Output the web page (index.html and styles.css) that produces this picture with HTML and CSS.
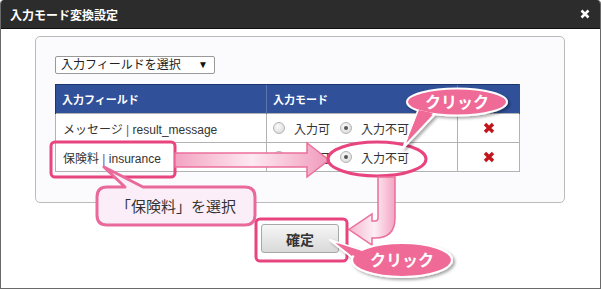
FILE: index.html
```html
<!DOCTYPE html>
<html lang="ja">
<head>
<meta charset="UTF-8" />
<meta name="viewport" content="width=device-width, initial-scale=1" />
<title>入力モード変換設定</title>
<link rel="stylesheet" href="styles.css">
</head>
<body>
  <div class="dialog">
    <div class="titlebar">
      <span class="title">入力モード変換設定</span>
      <svg class="close" width="10" height="10" viewBox="0 0 10 10">
        <path d="M1.5 1.5 L8.5 8.5 M8.5 1.5 L1.5 8.5" stroke="#fff" stroke-width="2.6" />
      </svg>
    </div>

    <div class="content">
      <div class="panel">
        <div class="select">入力フィールドを選択<span class="caret">▼</span></div>
        <table class="fields">
          <colgroup>
            <col class="c-field" />
            <col class="c-mode" />
            <col class="c-del" />
          </colgroup>
          <thead>
            <tr><th>入力フィールド</th><th>入力モード</th><th></th></tr>
          </thead>
          <tbody>
            <tr>
              <td>メッセージ <span class="sep">|</span> result_message</td>
              <td class="mode">
                <span class="radio"></span><span class="lbl">入力可</span>
                <span class="radio checked"></span><span class="lbl">入力不可</span>
              </td>
              <td class="del">
                <svg width="12" height="12" viewBox="0 0 12 12"><path d="M2 2 L10 10 M10 2 L2 10" stroke="#c3141c" stroke-width="3.4" /></svg>
              </td>
            </tr>
            <tr>
              <td>保険料 <span class="sep">|</span> insurance</td>
              <td class="mode">
                <span class="radio"></span><span class="lbl">入力可</span>
                <span class="radio checked"></span><span class="lbl">入力不可</span>
              </td>
              <td class="del">
                <svg width="12" height="12" viewBox="0 0 12 12"><path d="M2 2 L10 10 M10 2 L2 10" stroke="#c3141c" stroke-width="3.4" /></svg>
              </td>
            </tr>
          </tbody>
        </table>
      </div>
      <div class="footer">
        <button class="ok">確定</button>
      </div>
    </div>

    <!-- annotations drawn over the dialog -->
    <svg class="notes" width="601" height="289" viewBox="0 0 601 289">
      <defs>
        <linearGradient id="arrowFill" x1="0" y1="0" x2="1" y2="0">
          <stop offset="0" stop-color="#f3a3c2" />
          <stop offset="0.5" stop-color="#fde9f1" />
          <stop offset="1" stop-color="#f19abc" />
        </linearGradient>
        <linearGradient id="downFill" x1="0" y1="0" x2="1" y2="0">
          <stop offset="0" stop-color="#f6b6cf" />
          <stop offset="0.55" stop-color="#fdeef4" />
          <stop offset="1" stop-color="#f3a4c3" />
        </linearGradient>
        <filter id="shadow" x="-20%" y="-30%" width="150%" height="180%">
          <feDropShadow dx="2" dy="2" stdDeviation="1.5" flood-color="#000" flood-opacity="0.35" />
        </filter>
      </defs>

      <rect x="51" y="142" width="124" height="35" rx="4" fill="none" stroke="#e8457f" stroke-width="3" />

      <path d="M175 153 L307 153 L307 143 L329 160 L307 177 L307 167 L175 167 Z"
            fill="url(#arrowFill)" stroke="#ea6f9b" stroke-width="1.5" />

      <ellipse cx="377" cy="159" rx="49" ry="17" fill="none" stroke="#e8457f" stroke-width="3" />

      <path d="M378 177 L395 177 L395 218 Q395 238 375 238 L372 238 L372 245 L349 229.5 L372 214 L372 221 L375 221 Q378 221 378 218 Z"
            fill="url(#downFill)" stroke="#ea6f9b" stroke-width="1.5" />

      <rect x="256" y="219" width="91" height="42" rx="4" fill="none" stroke="#e8457f" stroke-width="3" />

      <path d="M107 187 L125 187 L104 167 L143 187 L245 187 Q255 187 255 197 L255 215 Q255 225 245 225 L107 225 Q97 225 97 215 L97 197 Q97 187 107 187 Z"
            fill="#fbeef9" stroke="#e8699a" stroke-width="3" stroke-linejoin="round" />
      <text x="176" y="212" class="pick">「保険料」を選択</text>

      <g filter="url(#shadow)">
        <path d="M418 111 L403 148 L435 114 Z" fill="#f06b98" stroke="#fff" stroke-width="2" stroke-linejoin="round" />
        <ellipse cx="457" cy="102" rx="50" ry="13.5" fill="#f06b98" stroke="#fff" stroke-width="2" />
        <path d="M419 110 L408 138 L433 113 Z" fill="#f06b98" />
      </g>
      <text x="457" y="108" class="click">クリック</text>

      <g filter="url(#shadow)">
        <path d="M360 250 L330 240 L359 263 Z" fill="#f06b98" stroke="#fff" stroke-width="2" stroke-linejoin="round" />
        <ellipse cx="402" cy="260" rx="50" ry="17" fill="#f06b98" stroke="#fff" stroke-width="2" />
        <path d="M362 251 L337 243 L361 261 Z" fill="#f06b98" />
      </g>
      <text x="402" y="266" class="click">クリック</text>
    </svg>
  </div>
</body>
</html>
```

FILE: styles.css
```css
* {
  box-sizing: border-box;
}
body {
  margin: 0;
  background: #fff;
  font-family: "Liberation Sans", "Noto Sans CJK JP", sans-serif;
  color: #333;
}
.dialog {
  position: relative;
  width: 601px;
  height: 289px;
  border: 1px solid #6a6a6a;
  border-top: none;
  border-radius: 4px 4px 0 0;
  overflow: hidden;
  background: #fff;
}
.titlebar {
  height: 29px;
  background: #2c2c2c;
  border-bottom: 1px solid #111;
  color: #fff;
  display: flex;
  justify-content: space-between;
  align-items: center;
  padding: 0 10px 0 9px;
}
.title {
  font-size: 12px;
  font-weight: bold;
}
.content {
  padding: 7px 35px 0 34px;
}
.panel {
  height: 167px;
  background: #fbfbfe;
  border: 1px solid #bbb;
  border-radius: 5px;
  padding: 19px 19px 0;
}
.select {
  width: 160px;
  height: 18px;
  border: 1px solid #999;
  border-radius: 2px;
  background: #fff;
  font-size: 12px;
  line-height: 16px;
  padding-left: 5px;
  position: relative;
  color: #222;
}
.caret {
  position: absolute;
  right: 6px;
  top: 0;
  font-size: 10px;
  color: #111;
}
.fields {
  margin-top: 10px;
  width: 464px;
  border-collapse: collapse;
  table-layout: fixed;
  font-size: 12px;
}
.c-field { width: 211px; }
.c-mode { width: 191px; }
.c-del { width: 62px; }
.fields th {
  height: 29px;
  background: #30509a;
  color: #fff;
  font-size: 11px;
  text-align: left;
  padding: 0 6px;
  border-top: 1px solid #1d356e;
  border-left: 1px solid #5b74ad;
}
.fields th:first-child {
  border-left: 1px solid #1d356e;
}
.fields th:last-child {
  border-right: 1px solid #30509a;
}
.fields td {
  height: 29px;
  border: 1px solid #b2b2b2;
  padding: 0 7px;
  background: #fff;
  white-space: nowrap;
}
.sep {
  color: #7a4a8c;
}
.mode {
  font-size: 0;
}
.radio {
  display: inline-block;
  vertical-align: middle;
  width: 12px;
  height: 12px;
  border-radius: 50%;
  border: 1px solid #b4b4b4;
  background: radial-gradient(circle at 40% 35%, #fafafa, #d6d6d6);
  position: relative;
  margin-left: -1px;
}
.radio.checked::after {
  content: "";
  position: absolute;
  left: 3px;
  top: 3px;
  width: 4px;
  height: 4px;
  border-radius: 50%;
  background: #555;
}
.lbl {
  font-size: 12px;
  vertical-align: middle;
  margin: 0 11px 0 9px;
}
.del {
  text-align: center;
}
.del svg {
  display: block;
  margin: 0 auto;
}
.footer {
  display: flex;
  justify-content: center;
  padding-top: 21px;
}
.ok {
  width: 78px;
  height: 29px;
  border: 1px solid #a8a8a8;
  border-radius: 3px;
  background: linear-gradient(#f6f6f6, #d9d9d9);
  font-family: "Noto Sans CJK JP", sans-serif;
  font-size: 14px;
  font-weight: bold;
  color: #333;
  padding: 0;
}
.notes {
  position: absolute;
  left: -1px;
  top: 0;
  pointer-events: none;
}
.pick {
  font-family: "Noto Sans CJK JP", sans-serif;
  font-size: 15px;
  fill: #333;
  text-anchor: middle;
}
.click {
  font-family: "Noto Sans CJK JP", sans-serif;
  font-size: 16px;
  font-weight: bold;
  fill: #fff;
  text-anchor: middle;
}
```
